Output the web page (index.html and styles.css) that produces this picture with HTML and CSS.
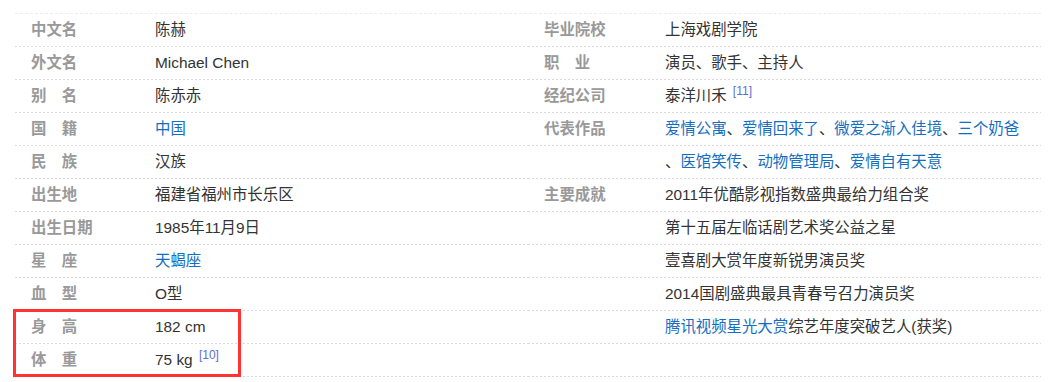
FILE: index.html
```html
<!DOCTYPE html>
<html lang="zh-CN">
<head>
<meta charset="utf-8">
<title>陈赫 基本信息</title>
<link rel="stylesheet" href="styles.css">
</head>
<body>
<div class="basic-info">
  <dl class="info-col info-left">
    <div class="row"><dt>中文名</dt><dd>陈赫</dd></div>
    <div class="row"><dt>外文名</dt><dd>Michael Chen</dd></div>
    <div class="row"><dt>别　名</dt><dd>陈赤赤</dd></div>
    <div class="row"><dt>国　籍</dt><dd><a href="#">中国</a></dd></div>
    <div class="row"><dt>民　族</dt><dd>汉族</dd></div>
    <div class="row"><dt>出生地</dt><dd>福建省福州市长乐区</dd></div>
    <div class="row"><dt>出生日期</dt><dd>1985年11月9日</dd></div>
    <div class="row"><dt>星　座</dt><dd><a href="#">天蝎座</a></dd></div>
    <div class="row"><dt>血　型</dt><dd>O型</dd></div>
    <div class="row"><dt>身　高</dt><dd>182 cm</dd></div>
    <div class="row"><dt>体　重</dt><dd>75 kg <sup class="ref">[10]</sup></dd></div>
  </dl>
  <dl class="info-col info-right">
    <div class="row"><dt>毕业院校</dt><dd>上海戏剧学院</dd></div>
    <div class="row"><dt>职　业</dt><dd>演员、歌手、主持人</dd></div>
    <div class="row"><dt>经纪公司</dt><dd>泰洋川禾 <sup class="ref">[11]</sup></dd></div>
    <div class="row"><dt>代表作品</dt><dd><a href="#">爱情公寓</a>、<a href="#">爱情回来了</a>、<a href="#">微爱之渐入佳境</a>、<a href="#">三个奶爸</a></dd></div>
    <div class="row"><dt></dt><dd>、<a href="#">医馆笑传</a>、<a href="#">动物管理局</a>、<a href="#">爱情自有天意</a></dd></div>
    <div class="row"><dt>主要成就</dt><dd>2011年优酷影视指数盛典最给力组合奖</dd></div>
    <div class="row"><dt></dt><dd>第十五届左临话剧艺术奖公益之星</dd></div>
    <div class="row"><dt></dt><dd>壹喜剧大赏年度新锐男演员奖</dd></div>
    <div class="row"><dt></dt><dd>2014国剧盛典最具青春号召力演员奖</dd></div>
    <div class="row"><dt></dt><dd><a href="#">腾讯视频星光大赏</a>综艺年度突破艺人(获奖)</dd></div>
    <div class="row"><dt></dt><dd></dd></div>
  </dl>
  <div class="highlight"></div>
</div>
</body>
</html>
```

FILE: styles.css
```css
html, body {
  margin: 0;
  padding: 0;
  background: #fff;
}

body {
  font-family: "Liberation Sans", Arial, "Noto Sans CJK SC", sans-serif;
  font-size: 15.4px;
  color: #333;
}

.basic-info {
  position: relative;
  display: flex;
  width: 1026px;
  margin: 13px 0 0 15px;
  border-top: 1px dashed #ececec;
}

.info-col {
  margin: 0;
  display: flex;
  flex-direction: column;
}

.info-left {
  width: 513px;
}

.info-right {
  flex: 1;
}

.row {
  display: flex;
  height: 33px;
  line-height: 32px;
  box-sizing: border-box;
  padding-bottom: 1px;
  background-image: linear-gradient(to right, #dadada 50%, transparent 50%);
  background-size: 4px 1px;
  background-repeat: repeat-x;
  background-position: left bottom;
  white-space: nowrap;
}

dt {
  flex: none;
  box-sizing: border-box;
  padding-left: 16px;
  font-weight: bold;
  color: #999;
}

.info-left dt {
  width: 140px;
}

.info-right dt {
  width: 137px;
}

dd {
  margin: 0;
  flex: 1;
  color: #333;
}

a {
  color: #136ec2;
  text-decoration: none;
}

.ref {
  font-size: 12px;
  color: #5d6fd1;
  margin-left: 2px;
  vertical-align: 6px;
  line-height: 0;
}

.highlight {
  position: absolute;
  left: -2px;
  top: 295px;
  width: 228px;
  height: 68px;
  box-sizing: border-box;
  border: 3px solid #f33;
  pointer-events: none;
}
```
